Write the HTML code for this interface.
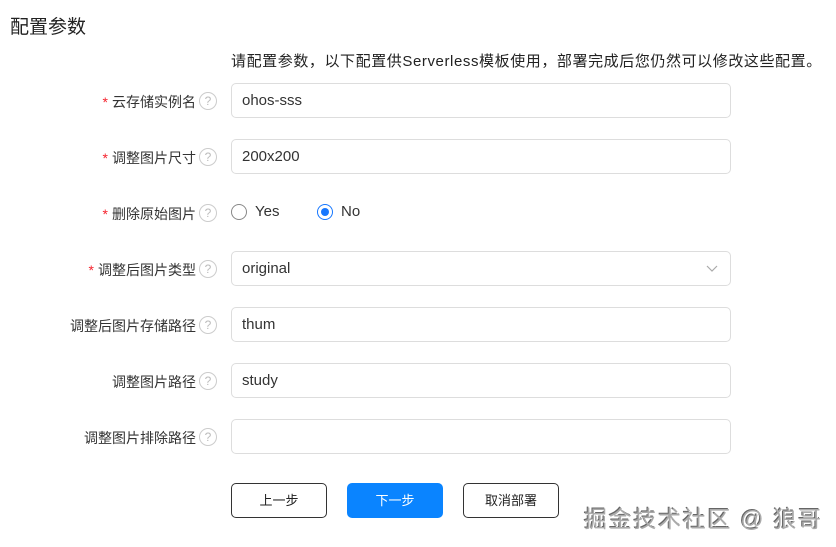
<!DOCTYPE html>
<html><head><meta charset="utf-8"><style>
body{margin:0;width:836px;height:547px;background:#fff;font-family:"Liberation Sans","Noto Sans CJK SC",sans-serif;color:#333;position:relative;overflow:hidden}
.a{position:absolute}
.title{left:10px;top:12px;font-size:19px;color:#222}
.desc{left:231px;top:50px;font-size:15px;color:#222;letter-spacing:0.58px}
.lab{right:640px;font-size:14px;color:#333;text-align:right;white-space:nowrap}
.lab b{color:#f5222d;font-weight:normal;margin-right:4px}
.q{left:199px;top:0;width:16px;height:16px;border:1px solid #ccc;border-radius:50%;color:#bbb;font-size:12px;text-align:center;line-height:16px}
.inp{left:231px;border:1px solid #ddd;border-radius:5px;font-size:15px;color:#333;line-height:33px;padding-left:10px;box-sizing:border-box;width:500px;height:35px}
.btn{top:483px;width:96px;height:35px;border:1px solid #333;border-radius:5px;box-sizing:border-box;text-align:center;line-height:33px;font-size:13px;color:#222}
</style></head><body>
<div class="a title">配置参数</div>
<div class="a desc">请配置参数，以下配置供Serverless模板使用，部署完成后您仍然可以修改这些配置。</div>

<div class="a lab" style="top:92px"><b>*</b>云存储实例名</div><div class="a q" style="top:92px">?</div>
<div class="a inp" style="top:83px">ohos-sss</div>

<div class="a lab" style="top:148px"><b>*</b>调整图片尺寸</div><div class="a q" style="top:148px">?</div>
<div class="a inp" style="top:139px">200x200</div>

<div class="a lab" style="top:204px"><b>*</b>删除原始图片</div><div class="a q" style="top:204px">?</div>
<div class="a" style="left:231px;top:204px;width:16px;height:16px;border:1px solid #888;border-radius:50%;box-sizing:border-box"></div>
<div class="a" style="left:255px;top:203px;font-size:15px">Yes</div>
<div class="a" style="left:317px;top:204px;width:16px;height:16px;border:1px solid #1677ff;border-radius:50%;box-sizing:border-box"><div style="margin:3px;width:8px;height:8px;border-radius:50%;background:#1677ff"></div></div>
<div class="a" style="left:341px;top:203px;font-size:15px">No</div>

<div class="a lab" style="top:260px"><b>*</b>调整后图片类型</div><div class="a q" style="top:260px">?</div>
<div class="a inp" style="top:251px">original</div>
<svg class="a" style="left:706px;top:263px" width="12" height="10"><path d="M1 3l5 5 5-5" fill="none" stroke="#aaa" stroke-width="1.2"/></svg>

<div class="a lab" style="top:316px">调整后图片存储路径</div><div class="a q" style="top:316px">?</div>
<div class="a inp" style="top:307px">thum</div>

<div class="a lab" style="top:372px">调整图片路径</div><div class="a q" style="top:372px">?</div>
<div class="a inp" style="top:363px">study</div>

<div class="a lab" style="top:428px">调整图片排除路径</div><div class="a q" style="top:428px">?</div>
<div class="a inp" style="top:419px"></div>

<div class="a btn" style="left:231px">上一步</div>
<div class="a btn" style="left:347px;background:#0a84ff;border-color:#0a84ff;color:#fff">下一步</div>
<div class="a btn" style="left:463px">取消部署</div>
<div class="a" style="left:584px;top:500px;font-size:23px;color:#aaa;text-shadow:1px 1px 0 #fff,-1px -1px 0 #666;letter-spacing:1.7px">掘金技术社区 @ 狼哥</div>
</body></html>
